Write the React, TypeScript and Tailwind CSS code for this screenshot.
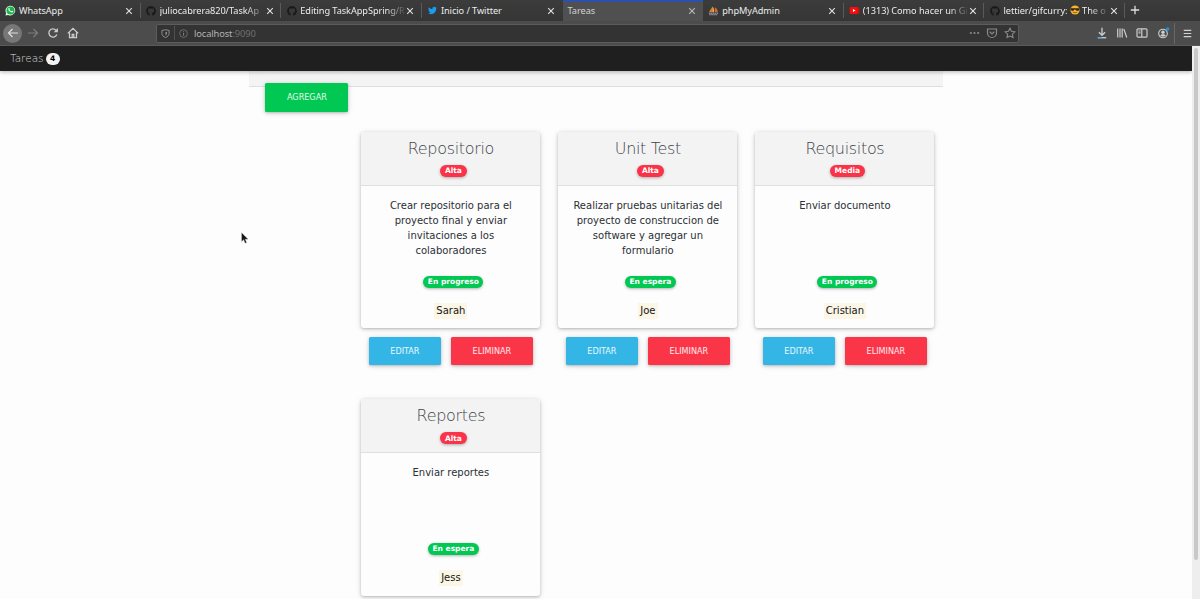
import type { ReactNode } from "react";
import { FaGithub, FaTwitter } from "react-icons/fa";

interface Task {
  title: string;
  priority: string;
  description: string;
  status: string;
  owner: string;
}

const tasks: Task[] = [
  { title: "Repositorio", priority: "Alta", description: "Crear repositorio para el proyecto final y enviar invitaciones a los colaboradores", status: "En progreso", owner: "Sarah" },
  { title: "Unit Test", priority: "Alta", description: "Realizar pruebas unitarias del proyecto de construccion de software y agregar un formulario", status: "En espera", owner: "Joe" },
  { title: "Requisitos", priority: "Media", description: "Enviar documento", status: "En progreso", owner: "Cristian" },
  { title: "Reportes", priority: "Alta", description: "Enviar reportes", status: "En espera", owner: "Jess" },
];

const WhatsAppIcon = () => (
  <svg viewBox="0 0 12 12" className="size-[11px]">
    <path d="M.5 11.5 1.2 8.6A5.3 5.3 0 1 1 3.5 10.8Z" fill="#e9f3ec" />
    <circle cx="6" cy="5.9" r="4.4" fill="#18b64b" />
    <path d="M4.1 3.4c.5-.5.8-.2 1.1.8.2.5-.4.7-.3 1 .5.9 1.1 1.4 2 1.7.3.1.5-.8.9-.6 1.2.5 1.2.7.8 1.3-.7.9-2.2.5-3.3-.4C3.800 6.100 3.100 4.500 4.100 3.400Z" fill="#fff" />
  </svg>
);

const PmaIcon = () => (
  <svg viewBox="0 0 12 12" className="size-[11px]">
    <path d="M1 8 4.200 2.500V8Z" fill="#d8862c" />
    <path d="M4.600 8V1.500C6.800 3 7.200 6 6.500 8Z" fill="#e9a356" />
    <path d="M7.500 8V2.500C9.800 4 10.800 6 10.600 8Z" fill="#d9662c" />
    <path d="M1 9h10M1.500 10.600h9" stroke="#a9aab8" strokeWidth="1.100" strokeDasharray="1.600 .6" />
  </svg>
);

const YoutubeIcon = () => (
  <svg viewBox="0 0 12 12" className="size-[11px]">
    <rect x=".5" y="2.300" width="11" height="7.400" rx="1" fill="#a81e12" />
    <rect x="1" y="2.300" width="8.500" height="7.400" rx="1" fill="#f80c0c" />
    <path d="M4.300 4.300 7.200 6 4.300 7.700Z" fill="#fff" />
  </svg>
);

const CoolFace = () => (
  <svg viewBox="0 0 12 12" className="inline-block size-[10px] align-[-1.500px]">
    <circle cx="6" cy="6" r="5.500" fill="#f7b52c" />
    <path d="M.8 3.800h10.400v1.500c-.4 2.200-4 2.300-4.700 0h-1c-.7 2.300-4.300 2.200-4.700 0Z" fill="#33251c" />
    <path d="M3.300 8.400Q6 10.500 8.700 8.400" stroke="#8a4a16" fill="none" />
  </svg>
);

const Close = ({ dim }: { dim?: boolean }) => (
  <svg viewBox="0 0 8 8" className={`size-[8px] shrink-0 ${dim ? "text-[#b8b8b8]" : "text-[#dedede]"}`}>
    <path d="m1.200 1.200 5.600 5.600m0-5.600L1.200 6.800" stroke="currentColor" strokeWidth="1.150" fill="none" />
  </svg>
);

interface Tab {
  id: string;
  icon?: ReactNode;
  title: ReactNode;
  active?: boolean;
  fade?: boolean;
  noDivider?: boolean;
}

const github = <FaGithub className="size-[10px] text-[#17191b]" />;

const tabs: Tab[] = [
  { id: "whatsapp", icon: <WhatsAppIcon />, title: "WhatsApp" },
  { id: "repo", icon: github, title: "juliocabrera820/TaskAp", fade: true },
  { id: "edit", icon: github, title: "Editing TaskAppSpring/R", fade: true },
  { id: "twitter", icon: <FaTwitter className="size-[9px] text-[#1b9cf0]" />, title: "Inicio / Twitter", noDivider: true },
  { id: "tareas", title: "Tareas", active: true, noDivider: true },
  { id: "pma", icon: <PmaIcon />, title: "phpMyAdmin" },
  { id: "youtube", icon: <YoutubeIcon />, title: "(1313) Como hacer un Gi", fade: true },
  { id: "gifcurry", icon: github, title: <>lettier/gifcurry: <CoolFace /> The o</>, fade: true },
];

function TabStrip() {
  return (
    <div className="flex h-[21px] bg-linear-to-b from-[#3c3c3c] to-[#353535] font-['Noto_Sans'] text-[9.200px] tracking-[-0.060px] text-[#ececec]">
      {tabs.map((t) => (
        <div
          key={t.id}
          className={`flex w-[140.650px] shrink-0 items-center pr-[7.500px] pl-[5px] ${
            t.active ? "border-t-2 border-[#2c51ad] bg-[#505050] pb-[2px] text-[#d2d2d2]" : ""
          }`}
        >
          {t.icon && <span className="mr-[3px] flex w-[11px] shrink-0 justify-center">{t.icon}</span>}
          <span
            className={`mr-[2px] min-w-0 flex-1 leading-[14px] whitespace-nowrap ${
              t.fade ? "[mask-image:linear-gradient(to_right,black_82%,transparent_103%)]" : ""
            }`}
          >
            {t.title}
          </span>
          <Close dim={t.active} />
          {!t.noDivider && <span className="-mr-[7.500px] ml-[6.500px] h-[15px] w-px bg-[#5a5a5a]" />}
        </div>
      ))}
      <svg viewBox="0 0 10 10" className="mt-[5px] ml-[5px] size-[10px]">
        <path d="M5 .8v8.400M.8 5h8.400" stroke="#dedede" strokeWidth="1.300" />
      </svg>
    </div>
  );
}

const iconClass = "size-[12px] shrink-0";

function Toolbar() {
  return (
    <div className="flex h-[25px] items-center border-b border-[#5a5a5a] bg-[#4c4c4c] text-[#cccccc]">
      <div className="ml-[3px] flex size-[19px] items-center justify-center rounded-full bg-[#777]">
        <svg viewBox="0 0 12 12" className={iconClass} fill="none" stroke="#e0e0e0" strokeWidth="1.200">
          <path d="M11 6H1.500m4-4-4 4 4 4" />
        </svg>
      </div>
      <svg viewBox="0 0 12 12" className="ml-[5px] size-[12px] shrink-0" fill="none" stroke="#7d7d7d" strokeWidth="1.200">
        <path d="M1 6h9.500m-4-4 4 4-4 4" />
      </svg>
      <svg viewBox="0 0 12 12" className="ml-[8px] size-[12px] shrink-0" fill="none" stroke="currentColor" strokeWidth="1.300">
        <path d="M9.800 7.500A4.100 4.100 0 1 1 9 3.200L10 4.300" />
        <path d="M10.900 1v4.300H6.600Z" fill="currentColor" stroke="none" />
      </svg>
      <svg viewBox="0 0 12 12" className="ml-[8px] size-[12px] shrink-0" fill="none" stroke="currentColor" strokeWidth="1.300">
        <path d="M.8 6.400 6 1.300l5.200 5.100M2.500 5.500v5.200h7V5.500M5.200 10.500V7.300h1.600v3.200" />
      </svg>
      <div className="ml-[77px] flex h-[19px] w-[863px] items-center rounded-[2px] border border-[#5c5c5c] bg-[#333] font-['Noto_Sans'] text-[9.300px] text-[#8f8f8f]">
        <svg viewBox="0 0 10 10" className="ml-[4px] size-[9px] shrink-0" fill="none" stroke="currentColor" strokeWidth="1.100">
          <path d="M5 .8 9 1.700v3C9 7 7.400 8.600 5 9.500 2.600 8.600 1 7 1 4.700v-3Z" />
          <path d="M5 3v4c1-.5 1.700-1.200 1.700-2.400V3.300Z" fill="currentColor" stroke="none" />
        </svg>
        <span className="ml-[4px] h-[14px] w-px bg-[#505050]" />
        <svg viewBox="0 0 10 10" className="ml-[4px] size-[9px] shrink-0" fill="none" stroke="#777" strokeWidth=".9">
          <circle cx="5" cy="5" r="4.300" />
          <path d="M5 4.500v3M5 2.500v1" strokeWidth="1.200" />
        </svg>
        <span className="flex-1 pt-px pl-[6px] tracking-[-0.100px] text-[#b4b4b4]">
          localhost<span className="text-[#707070]">:9090</span>
        </span>
        <svg viewBox="0 0 12 4" className="h-[4px] w-[11px]" fill="#8a8a8a">
          <circle cx="2" cy="2" r="1.200" />
          <circle cx="6" cy="2" r="1.200" />
          <circle cx="10" cy="2" r="1.200" />
        </svg>
        <svg viewBox="0 0 12 12" className="ml-[6px] size-[12px]" fill="none" stroke="#8a8a8a" strokeWidth="1.200">
          <path d="M1.500 2h9v4a4.500 4.500 0 0 1-9 0ZM3.700 4.800 6 7l2.300-2.200" />
        </svg>
        <svg viewBox="0 0 12 12" className="mr-[2px] ml-[6px] size-[12px]" fill="none" stroke="#8a8a8a" strokeWidth="1.100">
          <path d="m6 1.200 1.500 3.100 3.400.5-2.500 2.400.6 3.400-3-1.600-3 1.600.6-3.400L1.100 4.800l3.400-.5Z" />
        </svg>
      </div>
      <svg viewBox="0 0 12 12" className="ml-[77px] size-[12px] shrink-0" fill="none" stroke="currentColor" strokeWidth="1.300">
        <path d="M6 .8v7.400M2.900 5.200 6 8.300l3.100-3.100" />
        <path d="M1.800 10.700h8.400" />
        <path d="M1.800 10.700h4" stroke="#4ba3e8" />
      </svg>
      <svg viewBox="0 0 12 12" className="ml-[8px] size-[12px] shrink-0" fill="none" stroke="currentColor" strokeWidth="1.200">
        <path d="M1.700 1.500v9M4 1.500v9M6.200 1.500v9M7.800 2l3 8.500" />
      </svg>
      <svg viewBox="0 0 12 12" className="ml-[8px] size-[12px] shrink-0" fill="none" stroke="currentColor" strokeWidth="1.200">
        <rect x="1" y="1.800" width="10" height="8.400" rx="1" />
        <path d="M5.800 2v8M2.500 4h2M2.500 5.800h2" />
      </svg>
      <svg viewBox="0 0 14 12" className="ml-[9px] h-[12px] w-[14px] shrink-0">
        <circle cx="6" cy="6.500" r="4.300" fill="none" stroke="#cfcfcf" strokeWidth="1.100" />
        <circle cx="6" cy="5.300" r="1.700" fill="#cfcfcf" />
        <path d="M3.300 8.500c.8-1.700 4.600-1.700 5.400 0-1 1.500-4.400 1.500-5.400 0Z" fill="#cfcfcf" />
        <circle cx="10.600" cy="2" r="1.800" fill="#1595ee" />
      </svg>
      <span className="ml-[3px] h-[21px] w-px bg-[#686868]" />
      <svg viewBox="0 0 10 10" className="ml-[8px] size-[9px] shrink-0">
        <path d="M.8 1.500h8.400M.8 5h8.400M.8 8.500h8.400" stroke="#d2d2d2" strokeWidth="1.300" />
      </svg>
    </div>
  );
}

const raised = "shadow-[0_1px_3px_rgba(0,0,0,0.22),0_1px_6px_rgba(0,0,0,0.12)]";
const button = `flex h-[28.500px] items-center justify-center rounded-[1.500px] text-[8.100px] text-white/90 ${raised}`;
const pill = "flex h-[12px] items-center rounded-full text-[7.500px] leading-none font-bold text-white shadow-[0_1px_3px_rgba(0,0,0,0.3)]";

function TaskCard({ task }: { task: Task }) {
  return (
    <div className="flex w-[179px] flex-col">
      <article className={`flex h-[196.400px] flex-col overflow-hidden rounded-[3px] bg-[#fdfdfd] text-center ${raised}`}>
        <header className="flex h-[54px] shrink-0 flex-col items-center border-b border-[#dfdfdf] bg-[#f3f3f3] pt-[7px]">
          <h4 className="h-[19px] text-[16px] leading-[19px] font-extralight tracking-[-0.320px] text-[#3f4449]">{task.title}</h4>
          <span className={`${pill} mt-[7px] ml-[5px] bg-[#fb3349] px-[5px]`}>{task.priority}</span>
        </header>
        <div className="flex flex-col items-center pt-[12px]">
          <p className="h-[60px] w-[154px] text-[10px] leading-[15px] text-[#2b3035]">{task.description}</p>
          <span className={`${pill} mt-[17.500px] ml-[5px] bg-[#00c853] px-[4.500px]`}>{task.status}</span>
          <span className="mt-[15px] bg-[#fbf6e6] px-[2px] text-[10px] leading-[16px] text-[#151515]">{task.owner}</span>
        </div>
      </article>
      <div className="mt-[8.600px] flex gap-[10px] pl-[7.500px]">
        <button className={`${button} w-[72px] bg-[#33b5e5]`}>EDITAR</button>
        <button className={`${button} w-[82px] bg-[#fb3548]`}>ELIMINAR</button>
      </div>
    </div>
  );
}

export default function App() {
  return (
    <div className="relative flex h-[599px] w-[1200px] flex-col overflow-hidden bg-[#fdfdfd] font-['DejaVu_Sans',sans-serif]">
      <TabStrip />
      <Toolbar />
      <div className="flex min-h-0 flex-1">
        <div className="flex w-[1192px] flex-col overflow-hidden">
          <nav className="z-10 flex h-[25px] shrink-0 items-center bg-[#1f1f1f] pl-[10px] text-[10.500px] text-[#dcdcdc] shadow-[0_1px_4px_rgba(0,0,0,0.3)]">
            <span className="font-extralight">Tareas</span>
            <span className="ml-[2px] flex h-[12px] w-[14px] items-center justify-center rounded-full bg-[#f3f3f3] text-[7.500px] font-bold text-black">4</span>
          </nav>
          <main className="ml-[249px] w-[694px]">
            <div className="h-[16px] border-b border-[#dfdfdf] bg-[#f4f4f4] pt-[12px] pl-[16.400px]">
              <button className={`${button} w-[83px] bg-[#00c853]`}>AGREGAR</button>
            </div>
            <div className="mt-[45px] ml-[112.400px] grid grid-cols-[repeat(3,179px)] gap-x-[18px] gap-y-[34px]">
              {tasks.map((task) => (
                <TaskCard key={task.title} task={task} />
              ))}
            </div>
          </main>
        </div>
        <div className="flex w-[8px] justify-center bg-[#eeeeee] pt-[2px]">
          <div className="h-[512px] w-[4px] rounded-full bg-[#c9c9c9]" />
        </div>
      </div>
      <svg viewBox="0 0 8 12" className="absolute top-[232px] left-[241px] h-[12px] w-[8px]">
        <path d="M.5.5v9.300l2.100-2 1.500 3.500 1.600-.7-1.500-3.300h3Z" fill="#181818" stroke="#ddd" strokeWidth=".4" />
      </svg>
    </div>
  );
}
